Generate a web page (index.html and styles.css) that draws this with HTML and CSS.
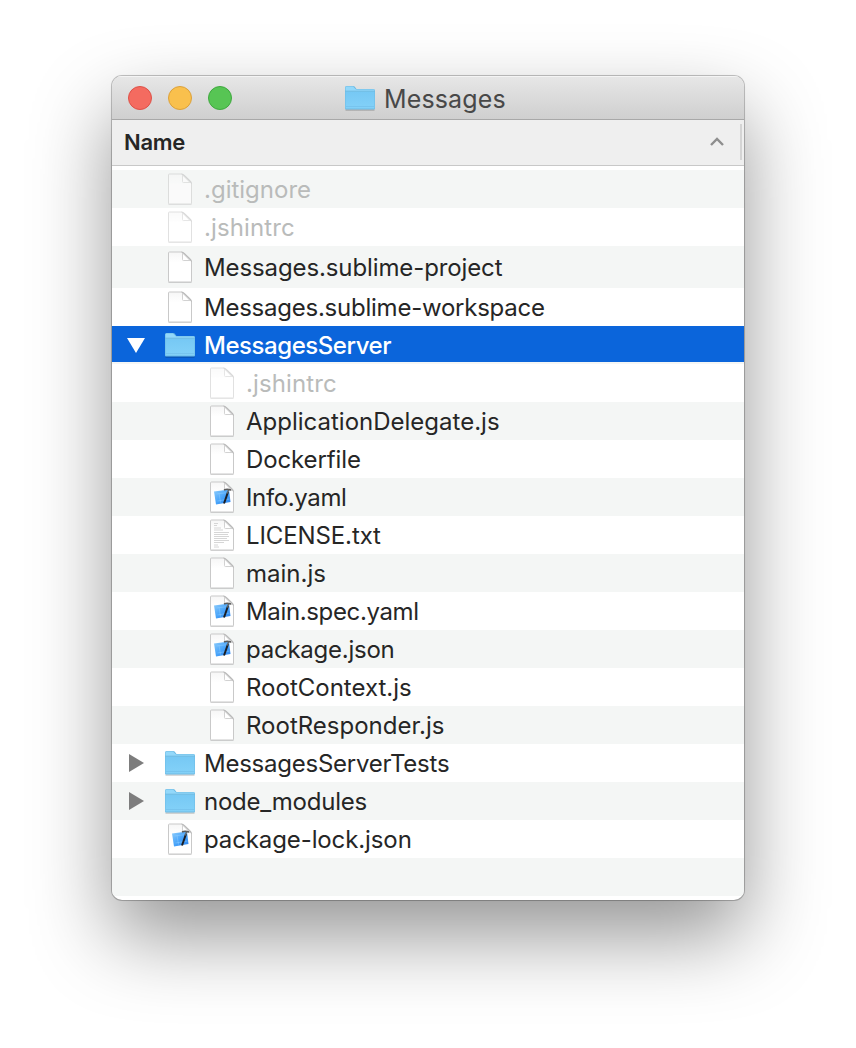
FILE: index.html
```html
<!DOCTYPE html>
<html lang="en">
<head>
<meta charset="utf-8">
<title>Messages</title>
<link rel="stylesheet" href="styles.css">
</head>
<body>
<svg width="0" height="0" class="defs" aria-hidden="true">
  <defs>
    <linearGradient id="folderFill" x1="0" y1="0" x2="0" y2="1"><stop offset="0" stop-color="#76c8f4"/><stop offset="1" stop-color="#83d1f8"/></linearGradient>
    <linearGradient id="blueprint" x1="0" y1="0" x2="1" y2="1"><stop offset="0" stop-color="#8fcdfb"/><stop offset=".5" stop-color="#4aa5fa"/><stop offset="1" stop-color="#2b83ee"/></linearGradient>
    <linearGradient id="paper" x1="0" y1="0" x2="0" y2="1"><stop offset="0" stop-color="#f6f6f6"/><stop offset=".35" stop-color="#fff"/></linearGradient>
    <symbol id="folder" viewBox="0 0 32 32">
      <path d="M1.500 28h29" stroke="#000" stroke-opacity=".2" stroke-width="1.500"/>
      <path d="M1 5.500Q1 4 2.500 4H9q1 0 1.600.6L12.500 7H29.500Q31 7 31 8.500V26.500q0 1-1 1H2q-1 0-1-1Z" fill="#6dbae3"/>
      <path d="M1.500 5.500Q1.500 4.500 2.500 4.500H9L12 7.500H30.500V10h-29Z" fill="#93d8fa"/>
      <path d="M1.500 9.500h29V26.500h-29Z" fill="url(#folderFill)"/>
      <path d="M1 9.200h30" stroke="#66b2dc" stroke-width=".8"/>
      <path d="M2 24.500h28" stroke="#72bee9" stroke-width=".7"/>
    </symbol>
    <symbol id="file" viewBox="0 0 32 32">
      <path d="M4.500 31.200h23" stroke="#000" stroke-opacity=".2" stroke-width="1.200"/>
      <path d="M5.500 1H18L27.500 10V30.500q0 .5-.5.500H5q-.5 0-.5-.5V2q0-1 1-1Z" fill="url(#paper)" stroke="#c9c9c9" stroke-width="1"/>
      <path d="M18.500 2V8.600q0 .9.900.9H26Z" fill="#fff" stroke="#d2d2d2" stroke-width="1"/>
      <path d="M17.500 1q1.500.2 3 1.700l5 4.800q1.800 1.600 2 3" fill="none" stroke="#b9b9b9" stroke-width="1.100"/>
    </symbol>
    <symbol id="xcode" viewBox="0 0 32 32">
      <use href="#file"/>
      <path d="M8 10.500L23 8.500l1.500 12.500L10 23.500Z" fill="url(#blueprint)"/>
      <path d="M10.500 13l12-1.500M11.500 20l12-2M13 12l1.500 9.500" stroke="#8cccff" stroke-width=".5"/>
      <path d="M22 11l-4 11.500" stroke="#1b1d22" stroke-width="2"/>
      <path d="M18 9q3-1.300 7 0" fill="none" stroke="#5c5c5c" stroke-width="1.500"/>
      <path d="M22.600 8.500l-1.300 4" stroke="#666" stroke-width="1.400"/>
    </symbol>
    <symbol id="txt" viewBox="0 0 32 32">
      <use href="#file"/>
      <path d="M8 4.500h4M8 6.500h3M8 9h7M8 11h9M8 13.500h15M8 15.500h14M8 17.500h15M8 19.500h13M8 21.500h15M8 23.500h10M8 26h4M8 28h5" stroke="#ccc" stroke-width=".8"/>
    </symbol>
  </defs>
</svg>
<main class="window">
  <header class="titlebar">
    <div class="lights"><span class="light red"></span><span class="light yellow"></span><span class="light green"></span></div>
    <div class="title"><svg class="icon"><use href="#folder"/></svg><span class="loose">Messages</span></div>
  </header>
  <div class="columns"><span class="column-name">Name</span>
    <svg class="sort" viewBox="0 0 16 10"><path d="M2 8l6-6 6 6"/></svg><i class="divider"></i>
  </div>
  <ul class="list">
    <li class="row dim"><i class="arrow"></i><svg class="icon"><use href="#file"/></svg><span>.gitignore</span></li>
    <li class="row dim"><i class="arrow"></i><svg class="icon"><use href="#file"/></svg><span class="loose">.jshintrc</span></li>
    <li class="row tall"><i class="arrow"></i><svg class="icon"><use href="#file"/></svg><span class="snug">Messages.sublime-project</span></li>
    <li class="row"><i class="arrow"></i><svg class="icon"><use href="#file"/></svg><span class="tight">Messages.sublime-workspace</span></li>
    <li class="row selected"><svg class="arrow" viewBox="0 0 24 24"><path d="M3 5h18l-9 15Z"/></svg><svg class="icon"><use href="#folder"/></svg><span class="tightest">MessagesServer</span></li>
    <li class="row child dim"><i class="arrow"></i><svg class="icon"><use href="#file"/></svg><span class="loose">.jshintrc</span></li>
    <li class="row child"><i class="arrow"></i><svg class="icon"><use href="#file"/></svg><span>ApplicationDelegate.js</span></li>
    <li class="row child"><i class="arrow"></i><svg class="icon"><use href="#file"/></svg><span class="snug">Dockerfile</span></li>
    <li class="row child"><i class="arrow"></i><svg class="icon"><use href="#xcode"/></svg><span class="tighter">Info.yaml</span></li>
    <li class="row child"><i class="arrow"></i><svg class="icon"><use href="#txt"/></svg><span class="snug">LICENSE.txt</span></li>
    <li class="row child"><i class="arrow"></i><svg class="icon"><use href="#file"/></svg><span>main.js</span></li>
    <li class="row child"><i class="arrow"></i><svg class="icon"><use href="#xcode"/></svg><span class="tighter">Main.spec.yaml</span></li>
    <li class="row child"><i class="arrow"></i><svg class="icon"><use href="#xcode"/></svg><span class="tight">package.json</span></li>
    <li class="row child"><i class="arrow"></i><svg class="icon"><use href="#file"/></svg><span>RootContext.js</span></li>
    <li class="row child"><i class="arrow"></i><svg class="icon"><use href="#file"/></svg><span>RootResponder.js</span></li>
    <li class="row"><svg class="arrow" viewBox="0 0 24 24"><path d="M5 3v18l15-9Z"/></svg><svg class="icon"><use href="#folder"/></svg><span class="tight">MessagesServerTests</span></li>
    <li class="row"><svg class="arrow" viewBox="0 0 24 24"><path d="M5 3v18l15-9Z"/></svg><svg class="icon"><use href="#folder"/></svg><span class="tight">node_modules</span></li>
    <li class="row"><i class="arrow"></i><svg class="icon"><use href="#xcode"/></svg><span class="snug">package-lock.json</span></li>
    <li class="row"></li>
  </ul>
</main>
</body>
</html>
```
FILE: styles.css
```css
* { box-sizing: border-box; }
body { margin: 0; height: 1048px; padding: 76px 112px; background: #fff; font-family: Inter, sans-serif; font-size: 24px; color: #262626; overflow: hidden; }
.defs { position: absolute; }
.window { width: 632px; height: 824px; border-radius: 10px; background: #fff; overflow: hidden; box-shadow: 0 0 0 1px rgba(0,0,0,.2), 0 0 2px rgba(0,0,0,.15), 0 36px 80px rgba(0,0,0,.42); }
.titlebar { height: 44px; display: grid; grid-template-columns: 232px 1fr; align-items: center; background: linear-gradient(#e7e7e7, #cfcfcf); border-bottom: 1px solid #a8a8a8; box-shadow: inset 0 1px #f4f4f4; }
.lights { display: flex; gap: 16px; padding: 1px 0 0 16px; }
.light { width: 24px; height: 24px; border-radius: 50%; border: 1px solid; }
.red { background: #f46b60; border-color: #dd5148; }
.yellow { background: #f9c04d; border-color: #dba03b; }
.green { background: #57c554; border-color: #3fa83f; }
.title { display: flex; align-items: center; gap: 8px; font-size: 25px; color: #484848; padding-top: 2px; }
.icon { width: 32px; height: 32px; flex: none; margin-bottom: 2px; }
.columns { height: 46px; display: flex; align-items: center; padding: 0 2px 1px 12px; background: #efefef; border-bottom: 1px solid #c8c8c8; font-size: 22px; font-weight: 600; }
.column-name { letter-spacing: -.3px; padding-bottom: 1px; }
.sort { width: 16px; height: 10px; margin-left: auto; fill: none; stroke: #8e8e8e; stroke-width: 2.4; }
.divider { width: 2px; height: 36px; background: #d4d4d4; margin-left: 15px; }
.list { list-style: none; margin: 0; padding: 4px 0 0; }
.row { height: 38px; display: flex; align-items: center; padding: 1px 0 0 12px; white-space: nowrap; }
.row:nth-child(odd) { background: #f4f6f5; }
.row .arrow { width: 24px; height: 24px; flex: none; margin: 0 16px 2px 0; fill: #7d7d7d; }
.row .icon { margin-right: 8px; }
.child .icon { margin-left: 42px; }
.dim span { color: #b9bbba; }
.dim .icon { opacity: .55; }
.row.tall { height: 42px; padding: 0 0 0 12px; }
.tall .icon { margin-bottom: 0; }
.row.selected { background: linear-gradient(#0b65db 36px, #f4f6f5 36px); color: #fff; font-weight: 500; }
.selected .arrow { fill: #fff; }
.loose { letter-spacing: .13px; }
.snug { letter-spacing: -.11px; }
.tight { letter-spacing: -.24px; }
.tighter { letter-spacing: -.36px; }
.tightest { letter-spacing: -.45px; }
```
